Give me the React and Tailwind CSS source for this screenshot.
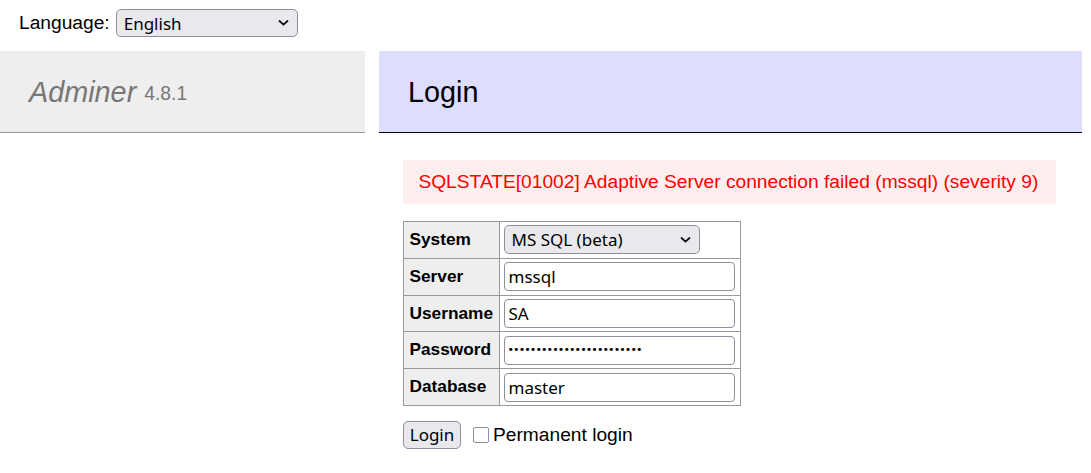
import React from "react";

function Chevron() {
  return (
    <svg width="11" height="7" viewBox="0 0 11 7" className="absolute right-[8px] top-1/2 -translate-y-1/2 pointer-events-none">
      <path d="M1.5 1.5 L5.5 5.2 L9.5 1.5" fill="none" stroke="#111" strokeWidth="1.8" strokeLinecap="round" strokeLinejoin="round" />
    </svg>
  );
}

function FakeSelect({ value, className }) {
  return (
    <div className={"relative inline-flex items-center bg-[#e9e9ed] border border-[#8f8f9d] rounded-[5px] pl-[7px] font-['Noto_Sans',sans-serif] text-[17px] text-black " + className}>
      <span className="leading-none">{value}</span>
      <Chevron />
    </div>
  );
}

function Field({ value, type = "text" }) {
  return (
    <input
      type={type}
      defaultValue={value}
      readOnly
      className="block w-[231px] h-[29px] border border-[#8f8f9d] rounded-[4px] bg-white px-[4px] font-['Noto_Sans',sans-serif] text-[17px] text-black outline-none"
    />
  );
}

const rows = [
  { label: "Username", value: "SA" },
  { label: "Password", value: "••••••••••••••••••••••••", pw: true },
  { label: "Database", value: "master" },
];

export default function App() {
  return (
    <div className="w-[1091px] min-h-[473px] bg-white text-black font-['Liberation_Sans',Arial,sans-serif] text-[19.2px] leading-[1.25]">
      <div className="flex items-center h-[46px] pl-[19px]">
        <span>Language:</span>
        <FakeSelect value="English" className="ml-[6px] w-[182px] h-[28px]" />
      </div>
      <div className="flex mt-[5px]">
        <div className="w-[365px] shrink-0">
          <div className="h-[82px] flex items-center bg-[#eeeeee] border-b border-[#999999] pl-[29px] text-[#777777]">
            <span className="italic text-[28.8px] leading-[36px]">Adminer</span>
            <span className="ml-[8px] text-[19.3px] mt-[6px]">4.8.1</span>
          </div>
        </div>
        <div className="ml-[14px] w-[703px]">
          <div className="h-[82px] flex items-center bg-[#ddddff] border-b border-black pl-[29px] text-[28.8px] leading-[36px]">
            Login
          </div>
          <div className="pl-[24px]">
            <div className="mt-[27px] mr-[26px] bg-[#ffeeee] text-[#ff0000] px-[15.4px] py-[10px] leading-[24px]">
              SQLSTATE[01002] Adaptive Server connection failed (mssql) (severity 9)
            </div>
            <table className="mt-[17px] border-separate border-spacing-0 border-t border-l border-[#999999] text-[17.28px] leading-[1.25]">
              <tbody>
                <tr>
                  <th className="w-[95px] bg-[#eeeeee] text-left font-bold px-[5.5px] py-[3.4px] border-r border-b border-[#999999]">System</th>
                  <td className="w-[241px] pl-[4px] pr-[4px] py-[3.4px] border-r border-b border-[#999999]">
                    <FakeSelect value="MS SQL (beta)" className="w-[196px] h-[29px] flex" />
                  </td>
                </tr>
                <tr>
                  <th className="bg-[#eeeeee] text-left font-bold px-[5.5px] py-[3.4px] border-r border-b border-[#999999]">Server</th>
                  <td className="pl-[4px] pr-[4px] py-[3.4px] border-r border-b border-[#999999]">
                    <Field value="mssql" />
                  </td>
                </tr>
                {rows.map((r) => (
                  <tr key={r.label}>
                    <th className="bg-[#eeeeee] text-left font-bold px-[5.5px] py-[3.4px] border-r border-b border-[#999999]">{r.label}</th>
                    <td className="pl-[4px] pr-[4px] py-[3.4px] border-r border-b border-[#999999]">
                      {r.pw ? (
                        <div className="w-[231px] h-[29px] border border-[#8f8f9d] rounded-[4px] bg-white px-[3px] flex items-center font-['DejaVu_Sans',sans-serif] text-[11px] tracking-[-0.9px] text-black overflow-hidden whitespace-nowrap">
                          {r.value}
                        </div>
                      ) : (
                        <Field value={r.value} />
                      )}
                    </td>
                  </tr>
                ))}
              </tbody>
            </table>
            <div className="flex items-center mt-[15px]">
              <button className="h-[28px] w-[58px] bg-[#e9e9ed] border border-[#8f8f9d] rounded-[5px] font-['Noto_Sans',sans-serif] text-[17px] text-black leading-none">
                Login
              </button>
              <span className="ml-[12px] w-[16px] h-[16px] border border-[#8f8f9d] rounded-[2px] bg-white inline-block"></span>
              <span className="ml-[4px]">Permanent login</span>
            </div>
          </div>
        </div>
      </div>
    </div>
  );
}
